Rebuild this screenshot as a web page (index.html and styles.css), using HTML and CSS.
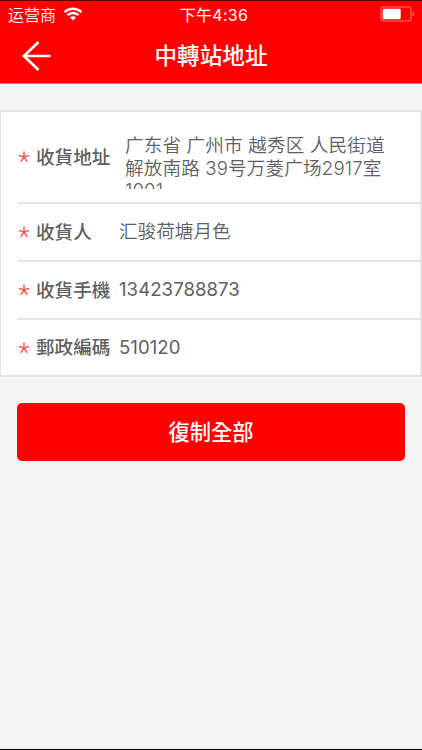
FILE: index.html
```
<!DOCTYPE html>
<html lang="zh-Hant">
<head>
    <meta charset="UTF-8">
    <meta name="viewport" content="width=device-width, initial-scale=1.0">
    <title>中轉站地址</title>
    <link rel="stylesheet" href="styles.css">
</head>
<body>
    <header class="header">
        <div class="status-bar">
            <div class="carrier">
                <span lang="zh-Hans">运营商</span>
                <svg class="wifi" width="20" height="14" viewBox="0 0 20 14">
                    <path d="M1.6 5.2a12 12 0 0 1 16.8 0M4.6 8.2a7.7 7.7 0 0 1 10.8 0" fill="none" stroke="#fff" stroke-width="2.4"/>
                    <path d="M10 13.6L7 10.6a4.3 4.3 0 0 1 6 0z" fill="#fff"/>
                </svg>
            </div>
            <div class="time">下午4:36</div>
            <div class="battery">
                <svg width="36" height="16" viewBox="0 0 36 16">
                    <rect x="1" y="1" width="30" height="14" rx="3" fill="none" stroke="#ff7070" stroke-width="1.1"/>
                    <rect x="2.7" y="2.8" width="18" height="10.4" rx="1" fill="#fff"/>
                    <path d="M32.6 5.8q1.8 .6 1.8 2.2t-1.8 2.2z" fill="#ff7070"/>
                </svg>
            </div>
        </div>
        <div class="nav-bar">
            <a class="back">
                <svg width="30" height="32" viewBox="0 0 30 32">
                    <path d="M16.5 2L2 16l14.5 14M2 16h26.5" fill="none" stroke="#fff" stroke-width="2.6"/>
                </svg>
            </a>
            <h1 class="title">中轉站地址</h1>
        </div>
    </header>

    <main class="content">
        <div class="card">
            <div class="row row-address">
                <svg class="star" width="12" height="12" viewBox="0 0 12 12"><path d="M6 6V.5M6 6L.8 4.4M6 6l5.2-1.6M6 6l3.3 4.8M6 6l-3.3 4.8"/></svg>
                <span class="label">收貨地址</span>
                <div class="value address" lang="zh-Hans">广东省 广州市 越秀区 人民街道<br>解放南路 39号万菱广场2917室<br>1001</div>
            </div>
            <div class="row">
                <svg class="star" width="12" height="12" viewBox="0 0 12 12"><path d="M6 6V.5M6 6L.8 4.4M6 6l5.2-1.6M6 6l3.3 4.8M6 6l-3.3 4.8"/></svg>
                <span class="label">收貨人</span>
                <span class="value name" lang="zh-Hans">汇骏荷塘月色</span>
            </div>
            <div class="row">
                <svg class="star" width="12" height="12" viewBox="0 0 12 12"><path d="M6 6V.5M6 6L.8 4.4M6 6l5.2-1.6M6 6l3.3 4.8M6 6l-3.3 4.8"/></svg>
                <span class="label">收貨手機</span>
                <span class="value number">13423788873</span>
            </div>
            <div class="row">
                <svg class="star" width="12" height="12" viewBox="0 0 12 12"><path d="M6 6V.5M6 6L.8 4.4M6 6l5.2-1.6M6 6l3.3 4.8M6 6l-3.3 4.8"/></svg>
                <span class="label">郵政編碼</span>
                <span class="value number">510120</span>
            </div>
        </div>
        <button class="copy-btn">復制全部</button>
    </main>
</body>
</html>
```
FILE: styles.css
```
* {
    box-sizing: border-box;
}

body {
    margin: 0;
    height: 750px;
    display: flex;
    flex-direction: column;
    background-color: #f4f4f4;
    border-bottom: 1px solid #000000;
    font-family: Inter, "Noto Sans CJK TC", sans-serif;
    color: #606060;
    overflow: hidden;
}

:lang(zh-Hans) {
    font-family: Inter, "Noto Sans CJK SC", sans-serif;
}

.header {
    height: 84px;
    background-color: #ff0000;
    border-top: 1px solid #600000;
    border-bottom: 1px solid #d98080;
    color: #ffffff;
}

.status-bar {
    display: grid;
    grid-template-columns: 1fr auto 1fr;
    align-items: center;
    height: 26px;
    padding: 0 6px 0 8px;
    font-size: 16px;
}

.carrier {
    display: flex;
    align-items: center;
    gap: 7px;
    font-weight: 350;
}

.time {
    padding-left: 4px;
    font-weight: 400;
    letter-spacing: 0.3px;
}

.battery {
    display: flex;
    justify-content: flex-end;
}

.nav-bar {
    display: grid;
    grid-template-columns: 60px 1fr 60px;
    align-items: center;
    height: 57px;
}

.back {
    display: flex;
    padding-left: 22px;
}

.title {
    margin: 0;
    text-align: center;
    font-size: 22.6px;
    font-weight: 500;
    line-height: 30px;
}

.content {
    padding-top: 26px;
}

.card {
    background-color: #ffffff;
    border: 2px solid #e5e5e5;
    border-left-width: 1px;
    padding-left: 16px;
}

.row {
    display: flex;
    align-items: center;
    height: 58px;
    border-bottom: 2px solid #e5e5e5;
    font-size: 18.6px;
}

.row:last-child {
    height: 55px;
    border-bottom: none;
}

.row-address {
    height: 92px;
}

.star {
    margin: 0 6px 0 1px;
    fill: none;
    stroke: #ff5050;
    stroke-width: 1.4;
}

.label {
    width: 83px;
    padding-bottom: 4px;
    font-weight: 500;
    white-space: nowrap;
}

.value {
    font-weight: 350;
    white-space: nowrap;
}

.name {
    padding-bottom: 5px;
}

.number {
    padding-bottom: 2px;
    font-weight: 400;
    letter-spacing: 0.05px;
}

/* the third line is cut off by the fixed height */
.address {
    height: 55px;
    margin: 9px 0 0 6px;
    line-height: 22.5px;
    letter-spacing: 0.15px;
    overflow: hidden;
}

.copy-btn {
    display: block;
    width: 388px;
    height: 58px;
    margin: 26px 17px 0;
    padding-bottom: 4px;
    border: none;
    border-radius: 5px;
    background-color: #ff0000;
    color: #ffffff;
    font-family: inherit;
    font-size: 21.3px;
    font-weight: 500;
}
```
